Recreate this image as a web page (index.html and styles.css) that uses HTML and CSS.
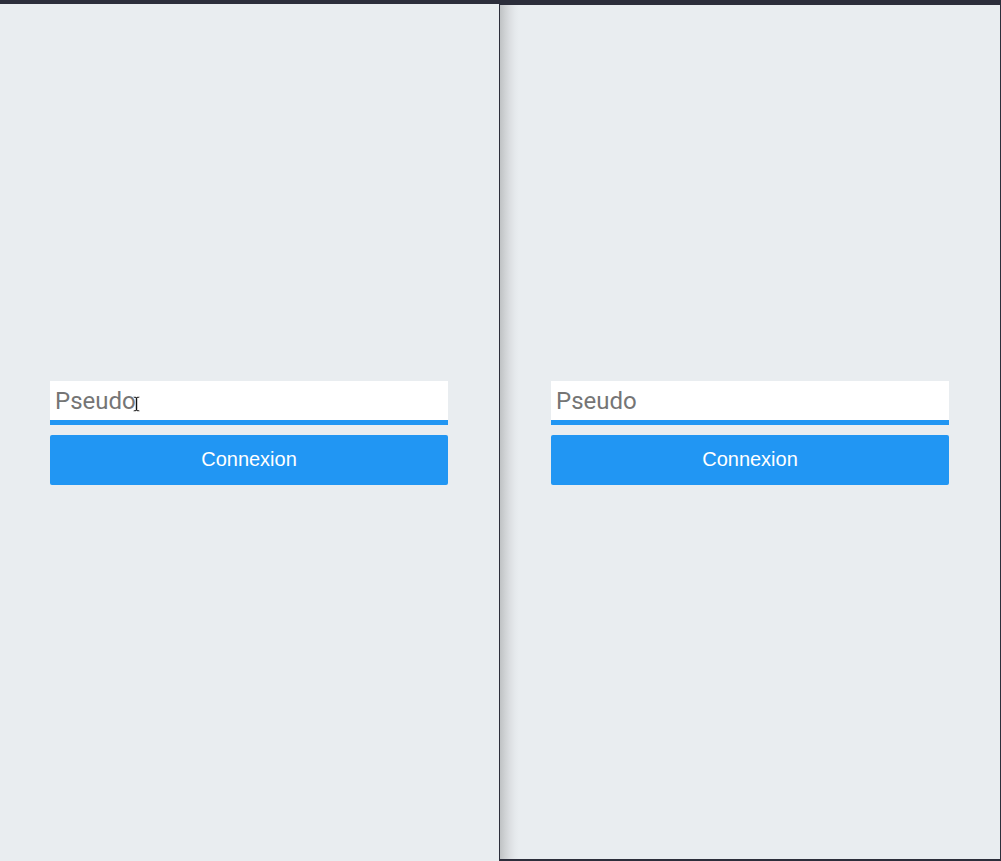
FILE: index.html
```html
<!DOCTYPE html>
<html lang="fr">
<head>
<meta charset="utf-8">
<title>Connexion</title>
<link rel="stylesheet" href="styles.css">
</head>
<body>
<div class="topbar"></div>
<div class="split">
  <section class="pane pane-left">
    <form class="login">
      <div class="field">
        <input class="pseudo" type="text" placeholder="Pseudo">
        <svg class="ibeam" width="7" height="16" viewBox="0 0 7 16" aria-hidden="true">
          <path d="M0.5 0.5h2.5v0.5h1v-0.5h2.5v1.5h-2v12h2v1.5h-2.5v-0.5h-1v0.5h-2.5v-1.5h2v-12h-2z" fill="#111" stroke="#fff" stroke-width="0.6"/>
        </svg>
      </div>
      <button class="btn" type="button">Connexion</button>
    </form>
  </section>
  <section class="pane pane-right">
    <form class="login">
      <div class="field">
        <input class="pseudo" type="text" placeholder="Pseudo">
      </div>
      <button class="btn" type="button">Connexion</button>
    </form>
  </section>
</div>
</body>
</html>
```
FILE: styles.css
```css
html, body {
  margin: 0;
  padding: 0;
  height: 861px;
  overflow: hidden;
}
body {
  background: #2c2e3b;
  font-family: Roboto, "Liberation Sans", sans-serif;
}
.topbar {
  height: 4px;
  background: #2c2e3b;
}
.split {
  display: flex;
  align-items: flex-start;
  gap: 1px;
}
.pane {
  display: flex;
  flex-direction: column;
  justify-content: center;
  background: #e9edf0;
  box-sizing: border-box;
}
.pane-left {
  width: 499px;
  height: 857px;
  padding: 1px 51px 0 50px;
}
.pane-right {
  width: 500px;
  height: 854px;
  margin-top: 1px;
  padding: 2px 51px 0 51px;
  background: linear-gradient(to right, #bfc2c4 0px, #cfd2d4 5px, #dcdfe2 10px, #e5e9ec 15px, #e9edf0 19px);
}
.login {
  display: flex;
  flex-direction: column;
  gap: 10px;
  margin: 0;
}
.field {
  position: relative;
}
.pseudo {
  display: block;
  width: 100%;
  box-sizing: border-box;
  height: 44px;
  margin: 0;
  border: 0;
  border-bottom: 5px solid #2196f3;
  border-radius: 0;
  padding: 0 5px;
  background: #fff;
  font-family: Roboto, sans-serif;
  font-size: 24px;
  color: #333;
  outline: none;
}
.pseudo::placeholder {
  color: #757575;
  opacity: 1;
}
.ibeam {
  position: absolute;
  left: 83px;
  top: 15px;
}
.btn {
  display: block;
  width: 100%;
  height: 50px;
  margin: 0;
  border: 0;
  border-radius: 2px;
  padding: 0 0 2px 0;
  background: #2196f3;
  color: #fff;
  font-family: "Liberation Sans", Arial, sans-serif;
  font-size: 20px;
  cursor: pointer;
}
```
